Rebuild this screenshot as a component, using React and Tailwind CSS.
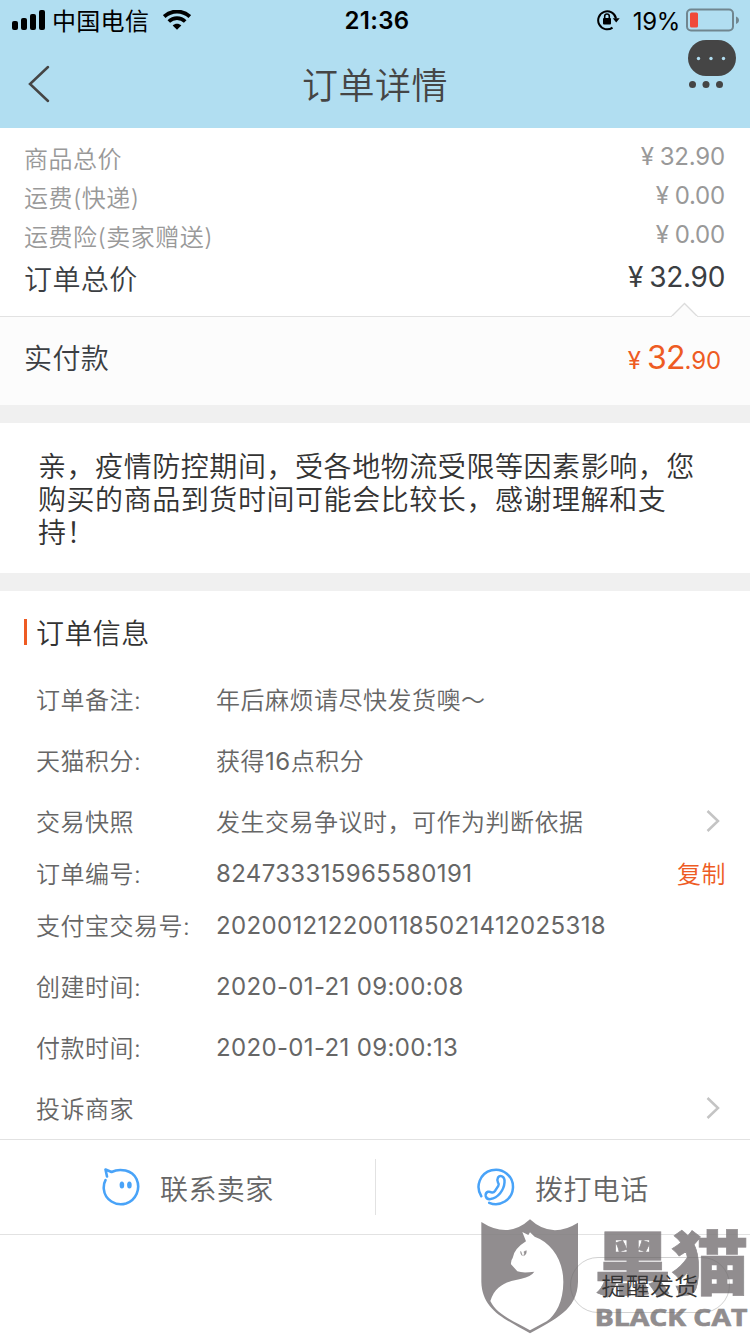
const prices = [
  { label: "商品总价", value: "32.90" },
  { label: "运费(快递)", value: "0.00" },
  { label: "运费险(卖家赠送)", value: "0.00" },
];

const infoRows = [
  { label: "订单备注:", value: "年后麻烦请尽快发货噢～" },
  { label: "天猫积分:", value: <>获得<span className="font-normal">16</span>点积分</> },
  { label: "交易快照", value: "发生交易争议时，可作为判断依据", arrow: true },
  { label: "订单编号:", value: "824733315965580191", numeric: true, copy: true, short: true },
  { label: "支付宝交易号:", value: "2020012122001185021412025318", numeric: true },
  { label: "创建时间:", value: "2020-01-21 09:00:08", numeric: true },
  { label: "付款时间:", value: "2020-01-21 09:00:13", numeric: true },
  { label: "投诉商家", value: "", arrow: true },
];

const StatusBar = () => (
  <div className="grid h-10 grid-cols-3 items-center pl-3 pr-2.5 text-black">
    <div className="flex items-center">
      <svg width="33" height="20" viewBox="0 0 33 20">
        <rect x="0" y="11" width="6" height="9" rx="2" />
        <rect x="9" y="8" width="6" height="12" rx="2" />
        <rect x="18" y="4" width="6" height="16" rx="2" />
        <rect x="27" y="0" width="6" height="20" rx="2" />
      </svg>
      <span className="ml-[7px] pt-[3px] text-[24px] font-normal leading-none tracking-[0.3px]">中国电信</span>
      <svg className="ml-[14px]" width="28" height="20" viewBox="0 0 28 20" fill="none" stroke="black">
        <path d="M1.200 6.600C8.500-.2 19.500-.2 26.800 6.600" strokeWidth="3.800" />
        <path d="M5.800 11.500C10.400 7 17.600 7 22.200 11.500" strokeWidth="3.700" />
        <path d="M14 19.800l-4.300-4.300c2.300-2.300 6.300-2.300 8.600 0z" fill="black" stroke="none" />
      </svg>
    </div>
    <div className="pl-0.5 pt-0.5 text-center text-[24px] font-semibold leading-none tracking-[0.3px]">21:36</div>
    <div className="flex items-center justify-end">
      <svg width="24" height="22" viewBox="0 0 24 22" fill="none" stroke="black" strokeWidth="2">
        <path d="M15.500 18.600A9 9 0 1 1 19 9.500" />
        <path d="M15.800 9.300h6.900l-3.500 4.200z" fill="black" stroke="none" />
        <rect x="6" y="9" width="8" height="6.500" rx="1" fill="black" stroke="none" />
        <path d="M7.700 10V7.300a2.300 2.300 0 0 1 4.600 0V10" strokeWidth="1.600" />
      </svg>
      <span className="ml-[12px] pt-[3px] text-[24px] font-normal leading-none tracking-[-0.3px]">19%</span>
      <svg className="ml-[6px]" width="54" height="24" viewBox="0 0 54 24">
        <rect x="1" y="1.500" width="46" height="21" rx="4" fill="none" stroke="#71868f" strokeWidth="2" />
        <rect x="4" y="4.500" width="8" height="15" rx="1.500" fill="#f04a3a" />
        <path d="M50 8.500c4 1.500 4 6 0 7.500z" fill="#71868f" />
      </svg>
    </div>
  </div>
);

const NavBar = () => (
  <div className="relative flex h-[88px] items-center justify-center">
    <svg className="absolute left-7 top-[25px]" width="22" height="38" viewBox="0 0 22 38" fill="none" stroke="#454545" strokeWidth="2.500" strokeLinecap="round">
      <path d="M20 2L2 19l18 17" />
    </svg>
    <h1 className="pt-[3px] text-[36px] font-[350] leading-none tracking-[0.5px] text-[#454545]">订单详情</h1>
    <svg className="absolute left-[688px] top-0" width="48" height="50" viewBox="0 0 48 50" fill="#454545">
      <rect width="48" height="36" rx="18" />
      <g fill="#b1def1">
        <circle cx="10.500" cy="18.500" r="1.700" />
        <circle cx="23" cy="18.500" r="1.700" />
        <circle cx="35.500" cy="18.500" r="1.700" />
      </g>
      <circle cx="4.500" cy="44.500" r="3.500" />
      <circle cx="18" cy="44.500" r="3.500" />
      <circle cx="31.500" cy="44.500" r="3.500" />
    </svg>
  </div>
);

const Arrow = () => (
  <svg width="14" height="24" viewBox="0 0 14 24" fill="none" stroke="#c4c4c4" strokeWidth="2.500">
    <path d="M1.500 2L12 12 1.500 22" />
  </svg>
);

const InfoRow = ({ item }) => (
  <div className={`flex items-center pl-9 pr-[25px] pt-0.5 text-[24px] tracking-[0.5px] text-[#666] ${item.short ? "h-[43px]" : "h-[61px]"}`}>
    <span className="w-[180px] whitespace-nowrap">{item.label}</span>
    <span className={`flex-1 whitespace-nowrap ${item.numeric ? "pb-0.5 font-normal tracking-[0.35px]" : ""}`}>{item.value}</span>
    {item.arrow && <span className="mr-[5px] pb-1"><Arrow /></span>}
    {item.copy && <span className="-mr-px text-[#ee5b23]">复制</span>}
  </div>
);

const BlackCat = () => (
  <svg className="absolute left-[470px] top-[1210px] opacity-[0.88]" width="280" height="124" viewBox="0 0 840 372">
    <path
      d="M34 36Q115 88 180 28Q244 88 324 38V215C322 300 255 327 180 370C105 327 36 300 34 215Z"
      fill="#827e80"
    />
    <path
      d="M157 66L175 75 180 67 194 80C245 98 280 150 280 216C280 275 257 315 230 334L180 361C128 331 82 315 61 273C77 220 121 213 154 206Q183 200 193 185Q158 190 142 184L123 163Q122 151 128 144Q132 116 168 94Z"
      fill="#fff"
    />
    <path d="M152 124q-1 8 5 13q-2-6-5-13zM162 125l7-3q1 12-8 15q4-6 1-12z" fill="#827e80" stroke="#827e80" strokeWidth="1.500" />
    <g fill="#827e80" stroke="#827e80">
      <text x="372" y="239" fontSize="212" fontWeight="900" textLength="464" lengthAdjust="spacingAndGlyphs" strokeWidth="2">黑猫</text>
      <text x="374" y="348" fontSize="67" fontWeight="700" fontFamily="Open Sans, sans-serif" textLength="458" lengthAdjust="spacingAndGlyphs" strokeWidth="2">BLACK CAT</text>
    </g>
  </svg>
);

const App = () => {
  return (
    <div className="relative h-[1334px] w-[750px] overflow-hidden bg-white font-[Inter,'Noto_Sans_CJK_SC',sans-serif] font-[350]">
      <header className="h-32 bg-[#b1def1]">
        <StatusBar />
        <NavBar />
      </header>

      <section className="flex h-[189px] flex-col border-b border-[#e2e2e2] pl-6 pr-[25px] pt-3">
        {prices.map((p) => (
          <div key={p.label} className="flex h-[39px] items-center justify-between text-[24px] text-[#999]">
            <span className="tracking-[0.5px]">{p.label}</span>
            <span className="flex items-center pb-[5px] font-normal tracking-[-0.2px]">
              <span className="mr-[6px]">¥</span>
              {p.value}
            </span>
          </div>
        ))}
        <div className="flex h-11 items-center justify-between text-[28px] text-[#3b3e42]">
          <span className="pt-px tracking-[0.4px]">订单总价</span>
          <span className="flex items-center pb-1 font-normal tracking-[-0.3px]">
            <span className="mr-[6px]">¥</span>
            32.90
          </span>
        </div>
      </section>

      <section className="relative flex h-[88px] items-center justify-between bg-[#fcfcfc] pl-6 pr-[29px] text-[#3b3e42]">
        <svg className="absolute left-[671px] top-[-15px]" width="27" height="16" viewBox="0 0 27 16">
          <path d="M.5 14.500l13-13 13 13" fill="#fcfcfc" stroke="#dcdcdc" strokeWidth="1.300" />
          <path d="M1 15h25" stroke="#fcfcfc" strokeWidth="2" />
        </svg>
        <span className="pb-1 text-[28px] tracking-[0.4px]">实付款</span>
        <span className="flex items-baseline pb-1.5 font-normal text-[#ee5b23]">
          <span className="mr-[6px] text-[24px]">¥</span>
          <span className="text-[32px] tracking-[-0.9px]">32</span>
          <span className="text-[24px] tracking-[-0.1px]">.90</span>
        </span>
      </section>

      <div className="h-[18px] bg-[#f0f0f0]" />
      <section className="h-[150px] pl-[38px] pt-7 text-[28px] leading-[33px] tracking-[0.56px] text-[#333]">
        <p>亲，疫情防控期间，受各地物流受限等因素影响，您</p>
        <p>购买的商品到货时间可能会比较长，感谢理解和支</p>
        <p>持！</p>
      </section>
      <div className="h-[18px] bg-[#f0f0f0]" />

      <section>
        <div className="flex h-[78px] items-center pl-6 pt-1">
          <span className="h-[26px] w-[3px] bg-[#ee5b23]" />
          <h2 className="ml-[9px] pt-[3px] text-[28px] font-[350] tracking-[0.4px] text-[#333]">订单信息</h2>
        </div>
        {infoRows.map((item) => (
          <InfoRow key={item.label} item={item} />
        ))}
      </section>

      <section className="flex h-24 items-center border-y border-[#e2e2e2] text-[28px] tracking-[0.4px] text-[#666]">
        <div className="flex h-14 w-[376px] items-center border-r border-[#e2e2e2] pl-[101px]">
          <svg width="40" height="40" viewBox="0 0 40 40" fill="none" stroke="#49a3f8" strokeWidth="2.600" strokeLinecap="round" strokeLinejoin="round">
            <path d="M6 9.500L4.500 2.500 10.500 5C19 .9 31 3 35.500 12C40 22 35 33 25 36.500C14.800 39.500 3.800 33 2.800 22Q2.400 17 4.500 13.200" />
            <g fill="#49a3f8" stroke="none">
              <ellipse cx="20.900" cy="18" rx="2.300" ry="3.500" />
              <ellipse cx="28.400" cy="18" rx="2.300" ry="3.500" />
            </g>
          </svg>
          <span className="ml-[19px] pt-[5px]">联系卖家</span>
        </div>
        <div className="flex items-center pl-[100px]">
          <svg width="40" height="40" viewBox="0 0 40 40" fill="none" stroke="#49a3f8" strokeWidth="2.500" strokeLinecap="round" strokeLinejoin="round">
            <path d="M5.300 29.200A17.200 17.200 0 1 1 13.200 35.800" />
            <path d="M22 10.500Q23.500 8.300 26 9.300Q29 10.500 28.500 15.500C28 23 22 31 14.500 32.100Q10.300 32.500 9.700 29Q9.300 25.700 12 24.800Q13.400 24.300 15.500 25.300Q17.400 26 19.200 23.700L22.300 18.800Q23.400 17.200 22 15.500Q20.600 13.200 22 10.500Z" />
          </svg>
          <span className="ml-[19px] pt-[5px]">拨打电话</span>
        </div>
      </section>

      <BlackCat />
      {/* reminder button stays readable over the badge */}
      <footer className="relative flex justify-end pr-5 pt-[22px]">
        <button className="h-14 w-40 rounded-full border border-[#666]/30 pt-[3px] text-[24px] font-[350] tracking-[0.2px] text-[#333]">
          提醒发货
        </button>
      </footer>
    </div>
  );
};

export default App;
